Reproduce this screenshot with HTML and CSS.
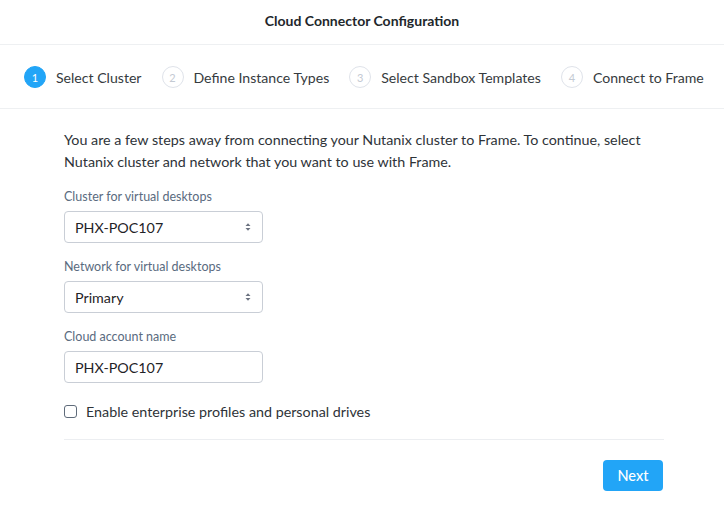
FILE: index.html
```html
<!DOCTYPE html>
<html>
<head>
<meta charset="utf-8">
<link rel="stylesheet" href="styles.css">
</head>
<body>
<header class="header">Cloud Connector Configuration</header>
<nav class="steps">
  <div class="step active"><span class="num">1</span><span class="label">Select Cluster</span></div>
  <div class="step"><span class="num">2</span><span class="label">Define Instance Types</span></div>
  <div class="step"><span class="num">3</span><span class="label">Select Sandbox Templates</span></div>
  <div class="step"><span class="num">4</span><span class="label">Connect to Frame</span></div>
</nav>
<main class="content">
  <p class="intro">You are a few steps away from connecting your Nutanix cluster to Frame. To continue, select Nutanix cluster and network that you want to use with Frame.</p>
  <div class="field">
    <div class="flabel">Cluster for virtual desktops</div>
    <div class="box select"><span>PHX-POC107</span>
      <svg class="arrows" width="6" height="10" viewBox="0 0 6 10"><path d="M0.5 4 L3 1.2 L5.5 4 Z M0.5 6 L3 8.8 L5.5 6 Z" fill="#6b7280"/></svg>
    </div>
  </div>
  <div class="field">
    <div class="flabel">Network for virtual desktops</div>
    <div class="box select"><span>Primary</span>
      <svg class="arrows" width="6" height="10" viewBox="0 0 6 10"><path d="M0.5 4 L3 1.2 L5.5 4 Z M0.5 6 L3 8.8 L5.5 6 Z" fill="#6b7280"/></svg>
    </div>
  </div>
  <div class="field">
    <div class="flabel">Cloud account name</div>
    <div class="box"><span>PHX-POC107</span></div>
  </div>
  <label class="check"><span class="cb"></span>Enable enterprise profiles and personal drives</label>
  <div class="footer">
    <button class="next">Next</button>
  </div>
</main>
</body>
</html>
```
FILE: styles.css
```css
* { box-sizing: border-box; }
html, body { margin: 0; padding: 0; background: #fff; }
body {
  font-family: "Lato", "Open Sans", sans-serif;
  color: #2b2f33;
  width: 724px;
}
.header {
  height: 45px;
  display: flex;
  align-items: center;
  justify-content: center;
  font-size: 14px;
  font-weight: 700;
  color: #22272b;
  border-bottom: 1px solid #eef0f2;
  padding-bottom: 3px;
}
.steps {
  height: 64px;
  display: flex;
  align-items: center;
  padding-left: 24px;
  padding-top: 1px;
  border-bottom: 1px solid #eef0f2;
  white-space: nowrap;
}
.step {
  display: flex;
  align-items: center;
  margin-right: 20px;
  flex-shrink: 0;
}
.step .num {
  width: 22px;
  height: 22px;
  border-radius: 50%;
  border: 1.5px solid #dfe3ea;
  color: #c4cad3;
  font-size: 11px;
  display: flex;
  align-items: center;
  justify-content: center;
  margin-right: 10px;
}
.step.active .num {
  background: #22a5f7;
  border-color: #22a5f7;
  color: #fff;
}
.step .label {
  font-size: 14.1px;
  color: #363b40;
}
.content {
  width: 600px;
  margin-left: 64px;
  padding-top: 20px;
}
.intro {
  margin: 0 0 16px;
  font-size: 14.3px;
  line-height: 22px;
  color: #2e3338;
}
.field { margin-bottom: 16px; height: 54px; display: flex; flex-direction: column; }
.flabel {
  font-size: 12.5px;
  color: #5a6b80;
  line-height: 16px;
  height: 16px;
  margin-bottom: 6px;
}
.box {
  width: 199px;
  height: 32px;
  flex-shrink: 0;
  border: 1px solid #c9ced6;
  border-radius: 4px;
  display: flex;
  align-items: center;
  justify-content: space-between;
  padding: 0 11px 0 10px;
  font-size: 14.3px;
  color: #1f2327;
}
.arrows { display: block; }
.check {
  display: flex;
  align-items: center;
  font-size: 14.3px;
  color: #2e3338;
  margin-top: 20px;
  height: 16px;
  padding-bottom: 20px;
  border-bottom: 1px solid #eceef1;
  box-sizing: content-box;
}
.cb {
  width: 13px;
  height: 13px;
  border: 1.5px solid #5f6b7a;
  border-radius: 3px;
  margin-right: 9px;
}
.footer {
  display: flex;
  justify-content: flex-end;
  padding-top: 20px;
}
.next {
  width: 60px;
  height: 31px;
  background: #22a5f7;
  color: #fff;
  border: none;
  border-radius: 4px;
  font-family: inherit;
  font-size: 14.5px;
  font-weight: 500;
  margin-right: 1px;
}
```
